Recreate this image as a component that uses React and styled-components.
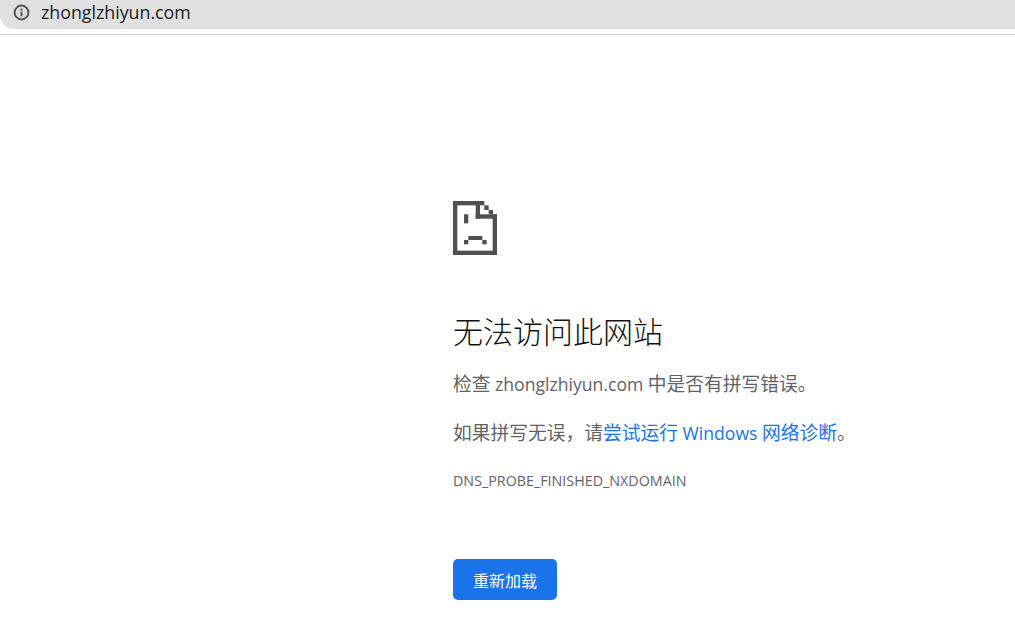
import styled, { createGlobalStyle } from 'styled-components';

const GlobalStyle = createGlobalStyle`
  html, body {
    margin: 0;
    padding: 0;
    background: #fff;
  }
  body {
    font-family: "Open Sans", "Noto Sans CJK SC", sans-serif;
    overflow: hidden;
  }
`;

const Page = styled.div`
  width: 1015px;
  height: 639px;
  display: flex;
  flex-direction: column;
`;

const TopBar = styled.header`
  height: 34px;
  border-bottom: 1px solid #d0d0d0;
  flex-shrink: 0;
`;

const AddressBar = styled.div`
  display: flex;
  align-items: center;
  gap: 11px;
  height: 29px;
  padding: 0 0 5px 13px;
  box-sizing: border-box;
  background: #e0e0e0;
  border-bottom-left-radius: 14px;
`;

const Url = styled.span`
  font-size: 17.8px;
  color: #202124;
  line-height: 20px;
`;

const InfoIcon = () => (
  <svg width="17" height="17" viewBox="0 0 17 17" aria-hidden="true">
    <circle cx="8.5" cy="8.5" r="6.9" fill="none" stroke="#555" strokeWidth="2" />
    <rect x="7.5" y="7.6" width="2" height="4.8" fill="#555" />
    <rect x="7.5" y="4.6" width="2" height="2" fill="#555" />
  </svg>
);

const Main = styled.main`
  padding: 166px 0 0 453px;
  width: 440px;
`;

const SadFile = styled.svg`
  display: block;
  width: 44px;
  height: 54px;
`;

const SadIcon = () => (
  <SadFile viewBox="0 0 132 162" fill="#505050">
    <rect x="0" y="0" width="94" height="13" />
    <rect x="0" y="0" width="13" height="162" />
    <rect x="0" y="149" width="132" height="13" />
    <rect x="119" y="40" width="13" height="122" />
    <rect x="68" y="0" width="13" height="53" />
    <rect x="68" y="40" width="64" height="13" />
    <rect x="94" y="13" width="13" height="14" />
    <rect x="107" y="27" width="13" height="13" />
    <rect x="33" y="40" width="13" height="27" />
    <rect x="46" y="105" width="42" height="12" />
    <rect x="33" y="117" width="13" height="13" />
    <rect x="88" y="117" width="13" height="13" />
  </SadFile>
);

const Title = styled.h1`
  margin: 57px 0 0;
  font-size: 30px;
  font-weight: 300;
  line-height: 40px;
  color: #111;
`;

const Para = styled.p`
  margin: ${(p) => p.$top}px 0 0;
  font-size: 18.75px;
  font-weight: 400;
  line-height: 28px;
  color: #5f6368;
  white-space: nowrap;
`;

const Latin = styled.span`
  font-size: 17.6px;
`;

const Link = styled.a`
  color: #1a73e8;
  text-decoration: none;
`;

const ErrorCode = styled.div`
  margin-top: 24px;
  font-size: 14.3px;
  font-weight: 400;
  line-height: 20px;
  color: #5f6368;
`;

const ReloadButton = styled.button`
  display: block;
  margin-top: 68px;
  width: 104px;
  height: 41px;
  padding: 0;
  border: 0;
  border-radius: 5px;
  background: #1a73e8;
  color: #fff;
  font-family: inherit;
  font-size: 16px;
  font-weight: 400;
`;

export default function App() {
  return (
    <>
      <GlobalStyle />
      <Page>
        <TopBar>
          <AddressBar>
            <InfoIcon />
            <Url>zhonglzhiyun.com</Url>
          </AddressBar>
        </TopBar>
        <Main>
          <SadIcon />
          <Title>无法访问此网站</Title>
          <Para $top={18}>
            检查<Latin> zhonglzhiyun.com </Latin>中是否有拼写错误。
          </Para>
          <Para $top={21}>
            如果拼写无误，请<Link href="#">尝试运行<Latin> Windows </Latin>网络诊断</Link>。
          </Para>
          <ErrorCode>DNS_PROBE_FINISHED_NXDOMAIN</ErrorCode>
          <ReloadButton>重新加载</ReloadButton>
        </Main>
      </Page>
    </>
  );
}
